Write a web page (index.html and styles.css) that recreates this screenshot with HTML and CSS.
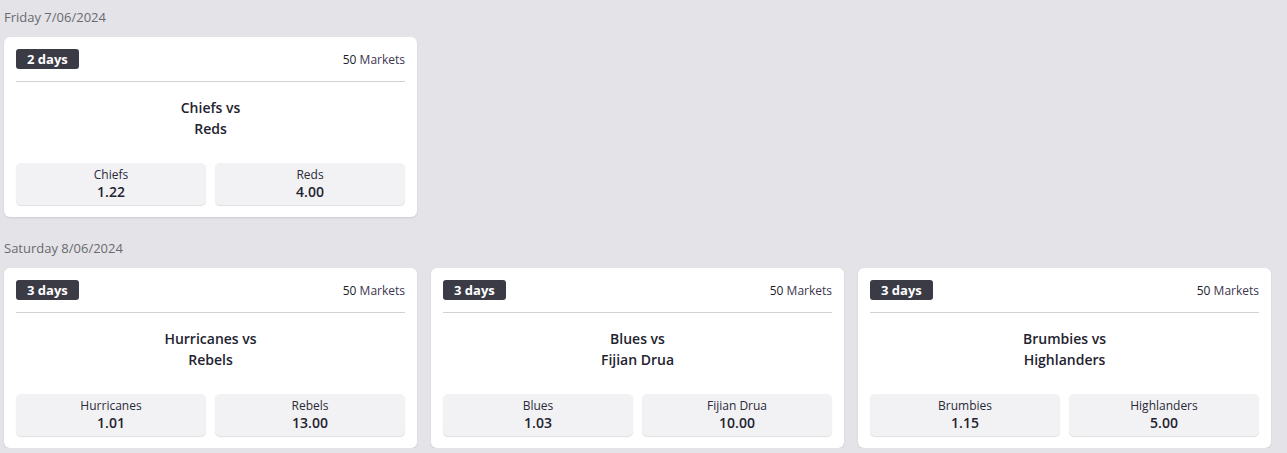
FILE: index.html
```html
<!DOCTYPE html>
<html lang="en">
<head>
<meta charset="utf-8">
<title>Matches</title>
<link rel="stylesheet" href="styles.css">
</head>
<body>
<main class="page">
  <section class="day">
    <h2 class="day-title">Friday 7/06/2024</h2>
    <div class="cards">
      <article class="card">
        <div class="card-head">
          <span class="badge">2 days</span>
          <span class="markets"><span class="num">50</span> Markets</span>
        </div>
        <div class="teams">Chiefs vs<br>Reds</div>
        <div class="odds">
          <button class="odd"><span class="odd-name">Chiefs</span><span class="odd-price">1.22</span></button>
          <button class="odd"><span class="odd-name">Reds</span><span class="odd-price">4.00</span></button>
        </div>
      </article>
    </div>
  </section>
  <section class="day">
    <h2 class="day-title">Saturday 8/06/2024</h2>
    <div class="cards">
      <article class="card">
        <div class="card-head">
          <span class="badge">3 days</span>
          <span class="markets"><span class="num">50</span> Markets</span>
        </div>
        <div class="teams">Hurricanes vs<br>Rebels</div>
        <div class="odds">
          <button class="odd"><span class="odd-name">Hurricanes</span><span class="odd-price">1.01</span></button>
          <button class="odd"><span class="odd-name">Rebels</span><span class="odd-price">13.00</span></button>
        </div>
      </article>
      <article class="card">
        <div class="card-head">
          <span class="badge">3 days</span>
          <span class="markets"><span class="num">50</span> Markets</span>
        </div>
        <div class="teams">Blues vs<br>Fijian Drua</div>
        <div class="odds">
          <button class="odd"><span class="odd-name">Blues</span><span class="odd-price">1.03</span></button>
          <button class="odd"><span class="odd-name">Fijian Drua</span><span class="odd-price">10.00</span></button>
        </div>
      </article>
      <article class="card">
        <div class="card-head">
          <span class="badge">3 days</span>
          <span class="markets"><span class="num">50</span> Markets</span>
        </div>
        <div class="teams">Brumbies vs<br>Highlanders</div>
        <div class="odds">
          <button class="odd"><span class="odd-name">Brumbies</span><span class="odd-price">1.15</span></button>
          <button class="odd"><span class="odd-name">Highlanders</span><span class="odd-price">5.00</span></button>
        </div>
      </article>
    </div>
  </section>
</main>
</body>
</html>
```

FILE: styles.css
```css
* { box-sizing: border-box; }
html, body {
  margin: 0;
  padding: 0;
  background: #e4e3e8;
  font-family: "Open Sans", "Noto Sans", sans-serif;
  color: #1d1d2b;
}
.page {
  padding: 8px 16px 0 4px;
  display: flex;
  flex-direction: column;
  gap: 22px;
}
.day-title {
  margin: 0 0 11px 0;
  font-size: 13px;
  line-height: 18px;
  font-weight: 400;
  color: #6a6a70;
}
.cards {
  display: grid;
  grid-template-columns: repeat(3, 1fr);
  gap: 14px;
}
.card {
  background: #fff;
  border-radius: 6px;
  padding: 12px;
  box-shadow: 0 1px 2px rgba(0, 0, 0, 0.10);
}
.card-head {
  display: flex;
  justify-content: space-between;
  align-items: center;
  height: 20px;
  margin-bottom: 12px;
}
.card-head + .teams { border-top: 1px solid #d2d2d6; }
.badge {
  background: #3b3b45;
  color: #fff;
  font-size: 13px;
  font-weight: 700;
  line-height: 20px;
  height: 20px;
  padding: 0 11px;
  border-radius: 3px;
}
.markets {
  font-size: 12px;
  color: #3d3650;
}
.markets .num { color: #1d1d2b; }
.teams {
  text-align: center;
  font-size: 14px;
  font-weight: 600;
  line-height: 21px;
  padding-top: 15px;
  padding-bottom: 24px;
  color: #23232f;
}
.odds {
  display: grid;
  grid-template-columns: 1fr 1fr;
  gap: 9px;
}
.odd {
  font-family: inherit;
  border: 0;
  margin: 0;
  background: #f2f2f4;
  border-radius: 5px;
  box-shadow: 0 1px 1px rgba(0, 0, 0, 0.13);
  padding: 3px 0 4px;
  display: flex;
  flex-direction: column;
  align-items: center;
  color: #23232f;
  height: 42px;
}
.odd-name {
  font-size: 12px;
  line-height: 17px;
  color: #2a2a38;
}
.odd-price {
  font-size: 14px;
  line-height: 18px;
  font-weight: 600;
}
```
